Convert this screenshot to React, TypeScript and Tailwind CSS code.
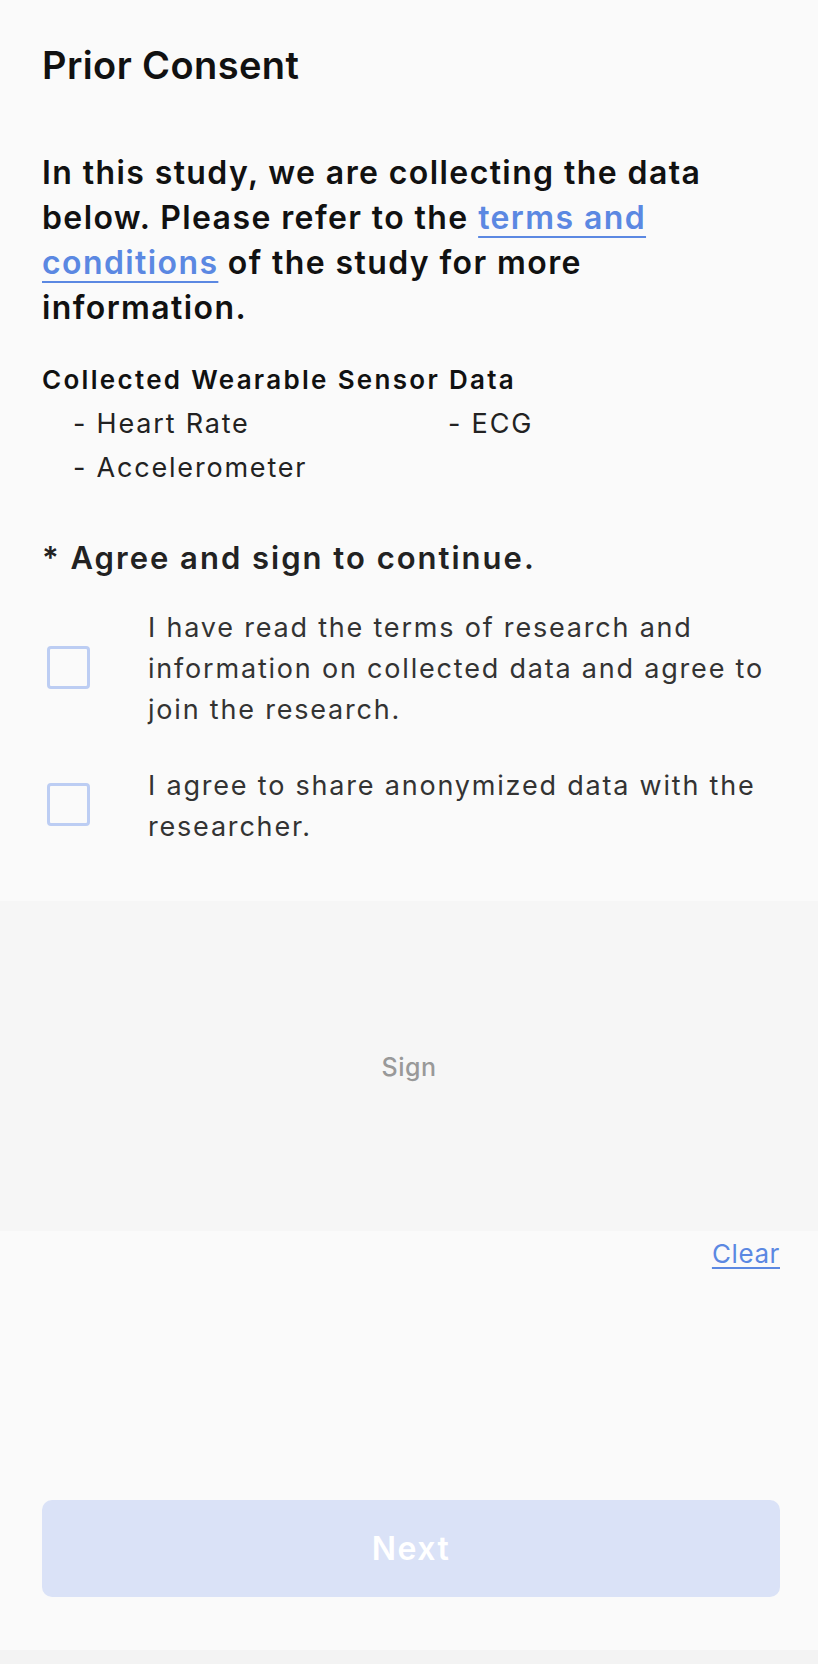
import { useState } from 'react'

const sensors = ['- Heart Rate', '- ECG', '- Accelerometer']

const agreements = [
  'I have read the terms of research and information on collected data and agree to join the research.',
  'I agree to share anonymized data with the researcher.',
]

function Checkbox({ checked, onChange }: { checked: boolean; onChange: () => void }) {
  return (
    <button
      type="button"
      onClick={onChange}
      className={`w-[43px] h-[43px] shrink-0 rounded-[4px] border-[3px] border-[#bccdf3] ${checked ? 'bg-[#bccdf3]' : 'bg-transparent'}`}
    />
  )
}

export default function App() {
  const [checked, setChecked] = useState([false, false])

  function toggle(i: number) {
    setChecked((prev) => prev.map((v, j) => (j === i ? !v : v)))
  }

  return (
    <div className="min-h-[1664px] flex flex-col bg-[#fafafa] font-['Inter','Liberation_Sans',sans-serif]">
      <div className="pl-[42px] pr-[38px]">
        <h1 className="mt-[42px] text-[38px] leading-[46px] font-semibold tracking-[0.4px] text-[#111]">Prior Consent</h1>

        <p className="mt-[62px] text-[32px] leading-[45px] font-semibold tracking-[1.4px] text-[#111]">
          In this study, we are collecting the data below. Please refer to the{' '}
          <a className="text-[#5b88e2] underline decoration-2 underline-offset-[7px]">terms and conditions</a> of the
          study for more information.
        </p>

        <h2 className="mt-[30px] text-[26px] leading-[40px] font-semibold tracking-[2.3px] text-[#111]">
          Collected Wearable Sensor Data
        </h2>
        <div className="grid grid-cols-[375px_1fr] pl-[31px] mt-[2px]">
          {sensors.map((s) => (
            <div key={s} className="text-[27px] leading-[44px] tracking-[1.8px] text-[#222]">
              {s}
            </div>
          ))}
        </div>

        <h3 className="mt-[48px] text-[31px] leading-[40px] font-semibold tracking-[2px] text-[#222]">
          * Agree and sign to continue.
        </h3>

        <div className="mt-[29px] flex flex-col gap-[35px]">
          {agreements.map((text, i) => (
            <label key={i} className="flex items-center">
              <div className="w-[106px] pl-[5px]">
                <Checkbox checked={checked[i]} onChange={() => toggle(i)} />
              </div>
              <span className="flex-1 text-[27px] leading-[41px] tracking-[1.8px] text-[#333]">{text}</span>
            </label>
          ))}
        </div>
      </div>

      <div className="mt-[54px] h-[330px] bg-[#f6f6f6] flex items-center justify-center">
        <span className="mt-[3px] text-[25px] font-medium tracking-[0.5px] text-[#999]">Sign</span>
      </div>

      <div className="pr-[38px] flex justify-end mt-[5px]">
        <button className="text-[26px] leading-[36px] tracking-[0.6px] text-[#5b88e2] underline underline-offset-[4px]">
          Clear
        </button>
      </div>

      <div className="flex-1" />

      <div className="pl-[42px] pr-[38px] pb-[53px]">
        <button
          disabled
          className="w-full h-[97px] rounded-[10px] bg-[#dae2f7] text-white text-[32px] font-semibold tracking-[1.5px]"
        >
          Next
        </button>
      </div>
      <div className="h-[14px] bg-[#f3f3f3]" />
    </div>
  )
}
